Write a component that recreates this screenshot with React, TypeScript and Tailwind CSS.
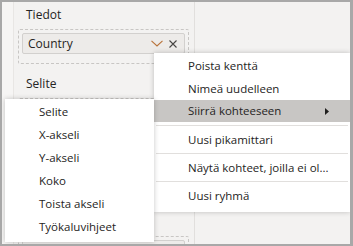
import React from 'react';

const font = { fontFamily: '"Open Sans", "Noto Sans", sans-serif' };

function Chevron() {
  return (
    <svg width="12" height="7" viewBox="0 0 12 7" className="shrink-0">
      <path d="M0.5 0.8 L6 6 L11.5 0.8" fill="none" stroke="#b8733a" strokeWidth="1.1" />
    </svg>
  );
}

function Cross() {
  return (
    <svg width="8" height="8" viewBox="0 0 8 8" className="shrink-0">
      <path d="M0.5 0.5 L7.5 7.5 M7.5 0.5 L0.5 7.5" fill="none" stroke="#484644" strokeWidth="1.1" />
    </svg>
  );
}

function FieldPill({ label }: { label: string }) {
  return (
    <div className="h-[21px] flex items-center pl-[5px] pr-[7px] bg-[#edebe9] border border-[#d2d0ce] rounded-[2px]">
      <span className="flex-1 text-[12px] leading-[17px] text-[#252423] whitespace-nowrap overflow-hidden">{label}</span>
      <div className="flex items-center gap-[6px]">
        <Chevron />
        <Cross />
      </div>
    </div>
  );
}

function Well({ children }: { children?: React.ReactNode }) {
  return (
    <div className="h-[35px] border border-dashed border-[#c8c6c4] rounded-[2px] p-[3px]">
      {children}
    </div>
  );
}

// title is left empty for the sections that the open menus cover
function Section({ title, children, first }: { title?: string; children?: React.ReactNode; first?: boolean }) {
  return (
    <div className={first ? '' : 'mt-[12px]'}>
      <div className="h-[16px] pl-[8px] text-[12px] leading-[16px] text-[#252423]">{title}</div>
      <div className="mt-[6px]">{children ?? <Well />}</div>
    </div>
  );
}

const mainItems = ['Poista kenttä', 'Nimeä uudelleen'];
const subItems = ['Selite', 'X-akseli', 'Y-akseli', 'Koko', 'Toista akseli', 'Työkaluvihjeet'];

export default function App() {
  return (
    <div
      className="w-[353px] h-[246px] bg-white border-t-2 border-l-2 border-r-[3px] border-b-2 border-[#a8a8a8] overflow-hidden"
      style={font}
    >
      <div className="relative h-full flex bg-[#f3f2f1]">
        {/* Fields pane */}
        <div className="w-[12px] bg-[#f6f5f4] border-r border-[#e8e6e4]" />
        <div className="w-[181px] pl-[4px] pr-[5px] pt-[5px] border-r border-[#e1dfdd] overflow-hidden">
          <Section title="Tiedot" first>
            <Well>
              <FieldPill label="Country" />
            </Well>
          </Section>
          <Section title="Selite" />
          <Section />
          <Section>
            <Well>
              <FieldPill label="Average of vuosikasvu" />
            </Well>
          </Section>
        </div>
        <div className="flex-1" />

        {/* Context menu */}
        <div className="absolute left-[152px] top-[51px] right-0 bg-white shadow-[0_0_5px_rgba(0,0,0,0.22)] pt-[1px] pb-[3px] text-[11.5px] text-[#252423]">
          {mainItems.map((t) => (
            <div key={t} className="h-[23px] flex items-center pl-[34px]">
              {t}
            </div>
          ))}
          <div className="h-[22px] flex items-center pl-[34px] pr-[21px] bg-[#c8c6c4]">
            <span className="flex-1">Siirrä kohteeseen</span>
            <svg width="4" height="7" viewBox="0 0 4 7">
              <path d="M0 0 L4 3.5 L0 7 Z" fill="#201f1e" />
            </svg>
          </div>
          <div className="mt-[3px] mx-[2px] h-px bg-[#e1dfdd]" />
          <div className="h-[27px] flex items-center pl-[34px]">Uusi pikamittari</div>
          <div className="mx-[2px] h-px bg-[#e1dfdd]" />
          <div className="h-[27px] flex items-center pl-[34px] whitespace-nowrap">Näytä kohteet, joilla ei ol...</div>
          <div className="mx-[2px] h-px bg-[#e1dfdd]" />
          <div className="h-[27px] flex items-center pl-[34px]">Uusi ryhmä</div>
        </div>

        {/* Submenu */}
        <div className="absolute left-[3px] top-[97px] w-[149px] bg-white shadow-[0_0_5px_rgba(0,0,0,0.22)] pt-[1px] pb-[4px] text-[11.5px] text-[#252423]">
          {subItems.map((t) => (
            <div key={t} className="h-[23px] flex items-center pl-[34px]">
              {t}
            </div>
          ))}
        </div>
      </div>
    </div>
  );
}
